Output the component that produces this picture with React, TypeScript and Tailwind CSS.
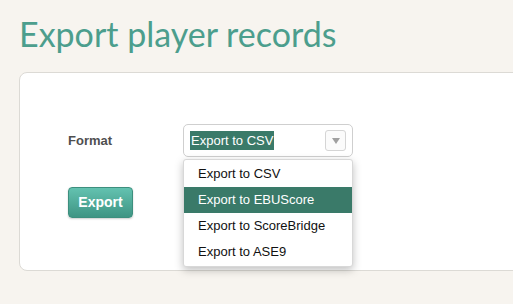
const OPTIONS = [
  "Export to CSV",
  "Export to EBUScore",
  "Export to ScoreBridge",
  "Export to ASE9",
];

export default function App() {
  return (
    <div className="h-[304px] w-[513px] overflow-hidden bg-[#f7f4ef]">
      <h1 className="pl-[19px] pt-[14px] font-['Lato',sans-serif] text-[34px] leading-[40px] text-[#4c9e8d]">
        Export player records
      </h1>
      <div className="ml-[19px] mt-[18px] h-[199px] w-[520px] rounded-[8px] border border-[#dcdad5] bg-white pl-[48px] pt-[51px] font-['Liberation_Sans',sans-serif]">
        <div className="flex items-center">
          <span className="w-[115px] text-[13px] font-bold text-[#4f4f4f]">Format</span>
          <div className="relative">
            <div className="flex h-[33px] w-[170px] items-center justify-between rounded-[5px] border border-[#cfcfcf] bg-white pl-[6px] pr-[6px]">
              <span className="bg-[#3a7a69] px-[1px] text-[13px] leading-[19px] text-white">Export to CSV</span>
              <span className="flex h-[21px] w-[21px] items-center justify-center rounded-[3px] border border-[#d5d5d5] bg-[#fbfbfb]">
                <svg width="8" height="6" viewBox="0 0 8 6">
                  <path d="M0 0h8L4 6z" fill="#a0a0a0" />
                </svg>
              </span>
            </div>
            <ul className="absolute left-0 top-[35px] z-10 w-[170px] rounded-[3px] border border-[#d8d8d8] bg-white py-px shadow-[0_3px_8px_rgba(0,0,0,0.25)]">
              {OPTIONS.map((o, i) => (
                <li
                  key={o}
                  className={`h-[26px] pl-[14px] text-[13px] leading-[26px] ${
                    i === 1 ? "bg-[#3a7a69] text-white" : "text-[#111]"
                  }`}
                >
                  {o}
                </li>
              ))}
            </ul>
          </div>
        </div>
        <button className="mt-[30px] h-[31px] w-[65px] rounded-[4px] border border-[#3d8f7e] bg-gradient-to-b from-[#63c2b0] to-[#3f9584] text-[14px] font-bold text-white shadow-[0_1px_2px_rgba(0,0,0,0.2)]">
          Export
        </button>
      </div>
    </div>
  );
}
